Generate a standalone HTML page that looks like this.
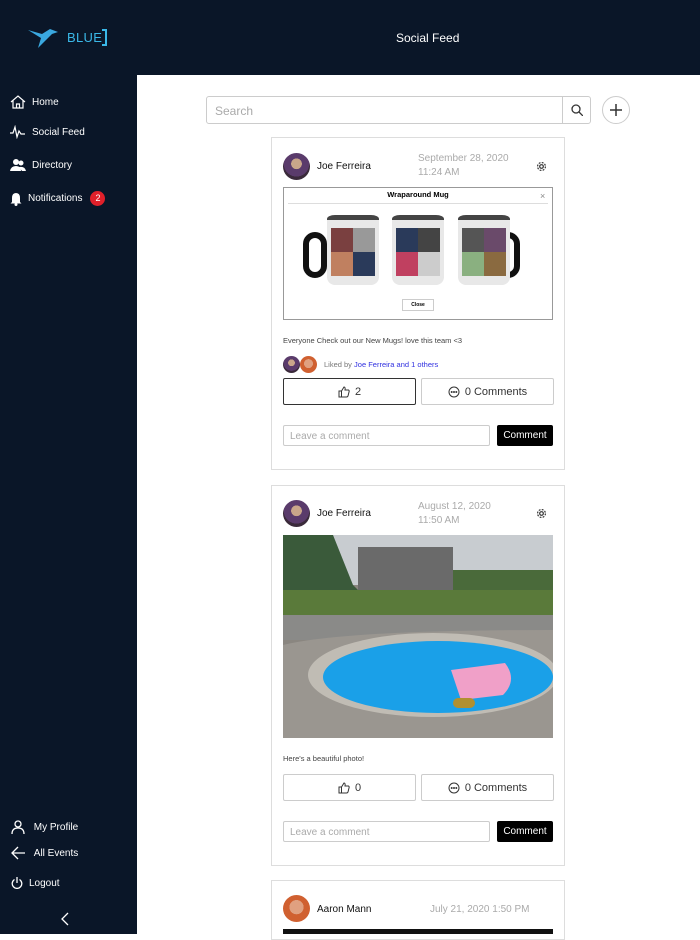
<!DOCTYPE html>
<html><head><meta charset="utf-8"><style>
*{box-sizing:border-box;margin:0;padding:0}
body{width:700px;height:934px;overflow:hidden;background:#fff;font-family:"Liberation Sans",sans-serif;position:relative}
.top{position:absolute;left:0;top:0;width:700px;height:75px;background:#0a1628}
.side{position:absolute;left:0;top:75px;width:137px;height:859px;background:#0a1628}
.title{position:absolute;left:396px;top:31px;color:#fff;font-size:12px}
.nav{position:absolute;color:#fff;font-size:10px;display:flex;align-items:center}
.nav svg{margin-right:6px}
.badge{display:inline-block;width:15px;height:15px;border-radius:50%;background:#e0202a;color:#fff;font-size:9px;text-align:center;line-height:15px;margin-left:8px}
.search{position:absolute;left:206px;top:96px;width:385px;height:28px;border:1px solid #ccc;border-radius:3px}
.search span{position:absolute;left:8px;top:7px;color:#aaa;font-size:12px}
.sbtn{position:absolute;right:0;top:0;width:28px;height:26px;border-left:1px solid #ccc}
.plus{position:absolute;left:602px;top:96px;width:28px;height:28px;border:1px solid #ccc;border-radius:50%}
.card{position:absolute;left:271px;width:294px;border:1px solid #ddd;background:#fff}
.av{position:absolute;width:27px;height:27px;border-radius:50%;background:radial-gradient(circle at 50% 40%,#c9a68a 0 25%,#5a3b6b 26% 60%,#3a2a3a 61%)}
.name{position:absolute;font-size:10px;color:#111}
.date{position:absolute;font-size:10px;color:#aaa;line-height:14px}
.btn{position:absolute;height:27px;border:1px solid #ccc;border-radius:2px;font-size:11px;color:#333;display:flex;align-items:center;justify-content:center}
.btn svg{margin-right:5px}
.ta{position:absolute;height:21px;border:1px solid #ccc;border-radius:2px;font-size:10px;color:#aaa;padding:5px 6px}
.cbtn{position:absolute;width:56px;height:21px;background:#000;color:#fff;font-size:10px;border-radius:2px;display:flex;align-items:center;justify-content:center}
.cap{position:absolute;font-size:7.5px;color:#444}
.mug{position:absolute;top:215px;width:52px;height:70px;background:#e8e8e8;border-radius:8px 8px 8px 8px/4px 4px 8px 8px;overflow:hidden;border-top:5px solid #444}
.mug i{position:absolute;left:4px;top:8px;width:44px;height:48px}
.handle{position:absolute;top:232px;width:24px;height:46px;border:6px solid #111;border-radius:12px}
</style></head><body>
<div class="top"></div><div class="side"></div>
<svg style="position:absolute;left:28px;top:26px" width="32" height="24" viewBox="0 0 32 24"><path d="M0 4 L14 8 L22 3 L30 6 L24 8 L18 14 L10 22 L13 12 Z" fill="#3aa8e0"/></svg>
<div style="position:absolute;left:67px;top:30px;color:#3ab8e8;font-size:13px;letter-spacing:0.3px">BLUE</div>
<div style="position:absolute;left:102px;top:29px;width:5px;height:17px;border:2px solid #3ab8e8;border-left:none"></div>
<div class="title">Social Feed</div>

<div class="nav" style="left:10px;top:95px"><svg width="16" height="14" viewBox="0 0 16 14" fill="none" stroke="#fff" stroke-width="1.2"><path d="M1 7L8 1L15 7M3 5V13H13V5M6.5 13V9H9.5V13"/></svg>Home</div>
<div class="nav" style="left:10px;top:125px"><svg width="16" height="14" viewBox="0 0 16 14" fill="none" stroke="#fff" stroke-width="1.2"><path d="M0 8H3L5 2L7 12L9 6L11 9H15"/></svg>Social Feed</div>
<div class="nav" style="left:10px;top:158px"><svg width="16" height="14" viewBox="0 0 16 14" fill="#fff"><circle cx="6" cy="4" r="3"/><circle cx="11" cy="5" r="2.5"/><path d="M0 13Q1 8 6 8Q11 8 11 13Z"/><path d="M9 9Q15 8 16 13H12Z"/></svg>Directory</div>
<div class="nav" style="left:10px;top:191px"><svg width="12" height="14" viewBox="0 0 12 14" fill="#fff"><path d="M6 1Q2 1 2 6V10L0.5 11.5H11.5L10 10V6Q10 1 6 1Z"/><circle cx="6" cy="12.5" r="1.5"/></svg>Notifications<span class="badge">2</span></div>
<div class="nav" style="left:11px;top:820px"><svg width="14" height="14" viewBox="0 0 14 14" fill="none" stroke="#fff" stroke-width="1.3"><circle cx="7" cy="4" r="3"/><path d="M1 14Q1 8 7 8Q13 8 13 14"/></svg>&nbsp;My Profile</div>
<div class="nav" style="left:11px;top:846px"><svg width="14" height="14" viewBox="0 0 14 14" fill="none" stroke="#fff" stroke-width="1.3"><path d="M14 7H1M7 1L1 7L7 13"/></svg>&nbsp;All Events</div>
<div class="nav" style="left:11px;top:877px"><svg width="12" height="12" viewBox="0 0 12 12" fill="none" stroke="#fff" stroke-width="1.3"><path d="M3.5 2.5A4.8 4.8 0 1 0 8.5 2.5M6 0V6"/></svg>Logout</div>
<svg style="position:absolute;left:60px;top:912px" width="10" height="14" viewBox="0 0 10 14" fill="none" stroke="#fff" stroke-width="1.3"><path d="M8 1L2 7L8 13"/></svg>

<div class="search"><span>Search</span><div class="sbtn"><svg style="margin:7px 8px" width="12" height="12" viewBox="0 0 12 12" fill="none" stroke="#333" stroke-width="1.3"><circle cx="5" cy="5" r="4"/><path d="M8 8L12 12"/></svg></div></div>
<div class="plus"><svg style="position:absolute;left:7px;top:7px" width="12" height="12" viewBox="0 0 12 12" stroke="#333" stroke-width="1.5"><path d="M6 0V12M0 6H12"/></svg></div>

<div class="card" style="top:137px;height:333px"></div>
<div class="av" style="left:283px;top:153px"></div>
<div class="name" style="left:317px;top:161px">Joe Ferreira</div>
<div class="date" style="left:418px;top:152px">September 28, 2020<br>11:24 AM</div>
<svg style="position:absolute;left:536px;top:161px" width="11" height="11" viewBox="0 0 12 12" fill="none" stroke="#333" stroke-width="1.3"><circle cx="6" cy="6" r="2"/><circle cx="6" cy="6" r="4.3" stroke-dasharray="2 1.4"/></svg>
<div style="position:absolute;left:283px;top:187px;width:270px;height:133px;border:1px solid #999;background:#fff"></div>
<div style="position:absolute;left:287px;top:190px;width:262px;text-align:center;font-size:7.5px;font-weight:bold">Wraparound Mug</div>
<div style="position:absolute;left:540px;top:191px;font-size:9px;color:#888">×</div>
<div style="position:absolute;left:288px;top:203px;width:260px;border-top:1px solid #ddd"></div>
<div class="handle" style="left:303px"></div>
<div class="handle" style="left:496px"></div>
<div class="mug" style="left:327px"><i style="background:conic-gradient(from 90deg at 50% 50%,#2a3a5a 0 25%,#c08060 25% 50%,#7a4040 50% 75%,#999 75%)"></i></div>
<div class="mug" style="left:392px"><i style="background:conic-gradient(from 90deg at 50% 50%,#ccc 0 25%,#c04060 25% 50%,#2a3a5a 50% 75%,#444 75%)"></i></div>
<div class="mug" style="left:458px"><i style="background:conic-gradient(from 90deg at 50% 50%,#8a6a40 0 25%,#8ab080 25% 50%,#555 50% 75%,#6a4a6a 75%)"></i></div>
<div style="position:absolute;left:402px;top:299px;width:32px;height:12px;border:1px solid #ccc;font-size:5px;font-weight:bold;text-align:center;line-height:11px">Close</div>
<div class="cap" style="left:283px;top:336px">Everyone Check out our New Mugs! love this team &lt;3</div>
<div class="av" style="left:283px;top:356px;width:17px;height:17px"></div>
<div class="av" style="left:300px;top:356px;width:17px;height:17px;background:radial-gradient(circle at 50% 45%,#e0a080 0 35%,#d06030 36%)"></div>
<div class="cap" style="left:324px;top:360px;color:#777">Liked by <span style="color:#3030e0">Joe Ferreira and 1 others</span></div>
<div class="btn" style="left:283px;top:378px;width:133px;border:1px solid #333"><svg width="12" height="12" viewBox="0 0 12 12" fill="none" stroke="#333" stroke-width="1"><path d="M1 5H3.5V11H1ZM3.5 5L6 1Q7.5 1 7 4H10.5Q11.5 4.5 11 6L10 10Q9.5 11 8.5 11H3.5"/></svg>2</div>
<div class="btn" style="left:421px;top:378px;width:133px"><svg width="12" height="12" viewBox="0 0 12 12" fill="none" stroke="#333" stroke-width="1"><circle cx="6" cy="6" r="5"/><circle cx="3.7" cy="6" r=".5" fill="#333"/><circle cx="6" cy="6" r=".5" fill="#333"/><circle cx="8.3" cy="6" r=".5" fill="#333"/></svg>0 Comments</div>
<div class="ta" style="left:283px;top:425px;width:207px">Leave a comment</div>
<div class="cbtn" style="left:497px;top:425px">Comment</div>

<div class="card" style="top:485px;height:381px"></div>
<div class="av" style="left:283px;top:500px"></div>
<div class="name" style="left:317px;top:508px">Joe Ferreira</div>
<div class="date" style="left:418px;top:500px">August 12, 2020<br>11:50 AM</div>
<svg style="position:absolute;left:536px;top:508px" width="11" height="11" viewBox="0 0 12 12" fill="none" stroke="#333" stroke-width="1.3"><circle cx="6" cy="6" r="2"/><circle cx="6" cy="6" r="4.3" stroke-dasharray="2 1.4"/></svg>
<svg style="position:absolute;left:283px;top:535px" width="270" height="203" viewBox="0 0 270 203">
<rect width="270" height="203" fill="#8a8680"/>
<rect width="270" height="50" fill="#c8ccd0"/>
<path d="M0 0H50L70 50L90 70H0Z" fill="#3a5a3a"/><path d="M170 35H270V80H170Z" fill="#4a6a3a"/>
<rect x="75" y="12" width="95" height="50" fill="#6a6a6a"/>
<rect x="0" y="55" width="270" height="28" fill="#5a7a3a"/>
<rect x="0" y="80" width="270" height="25" fill="#8a8a88"/>
<path d="M0 110 Q60 95 270 95 V203 H0Z" fill="#9a9690"/>
<ellipse cx="150" cy="140" rx="125" ry="42" fill="#c0bcb4"/>
<ellipse cx="155" cy="142" rx="115" ry="36" fill="#1aa0e8"/>
<path d="M168 135 L222 128 Q235 145 220 160 L178 165 Z" fill="#f0a0c8"/>
<rect x="170" y="163" width="22" height="10" rx="5" fill="#b09030"/>
</svg>
<div class="cap" style="left:283px;top:754px">Here's a beautiful photo!</div>
<div class="btn" style="left:283px;top:774px;width:133px"><svg width="12" height="12" viewBox="0 0 12 12" fill="none" stroke="#333" stroke-width="1"><path d="M1 5H3.5V11H1ZM3.5 5L6 1Q7.5 1 7 4H10.5Q11.5 4.5 11 6L10 10Q9.5 11 8.5 11H3.5"/></svg>0</div>
<div class="btn" style="left:421px;top:774px;width:133px"><svg width="12" height="12" viewBox="0 0 12 12" fill="none" stroke="#333" stroke-width="1"><circle cx="6" cy="6" r="5"/><circle cx="3.7" cy="6" r=".5" fill="#333"/><circle cx="6" cy="6" r=".5" fill="#333"/><circle cx="8.3" cy="6" r=".5" fill="#333"/></svg>0 Comments</div>
<div class="ta" style="left:283px;top:821px;width:207px">Leave a comment</div>
<div class="cbtn" style="left:497px;top:821px">Comment</div>

<div class="card" style="top:880px;height:60px"></div>
<div class="av" style="left:283px;top:895px;background:radial-gradient(circle at 50% 45%,#e0a080 0 35%,#d06030 36%)"></div>
<div class="name" style="left:317px;top:904px">Aaron Mann</div>
<div class="date" style="left:430px;top:903px">July 21, 2020 1:50 PM</div>
<div style="position:absolute;left:283px;top:929px;width:270px;height:5px;background:#111"></div>
</body></html>
